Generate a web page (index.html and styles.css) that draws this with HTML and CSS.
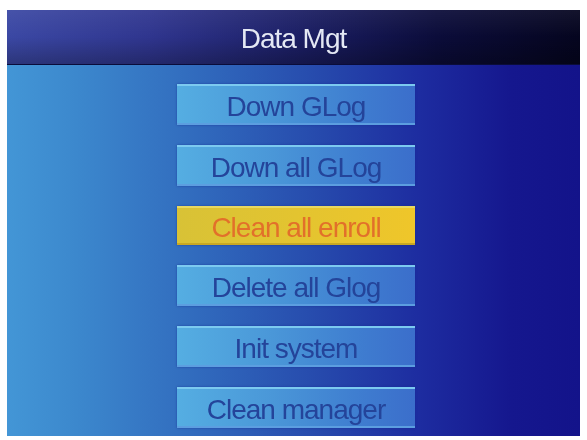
FILE: index.html
```html
<!DOCTYPE html>
<html lang="en">
<head>
<meta charset="utf-8">
<title>Data Mgt</title>
<link rel="stylesheet" href="styles.css">
</head>
<body>
<div class="screen">
  <div class="header"><span class="title">Data Mgt</span></div>
  <div class="menu">
    <div class="item">Down GLog</div>
    <div class="item">Down all GLog</div>
    <div class="item selected">Clean all enroll</div>
    <div class="item">Delete all Glog</div>
    <div class="item">Init system</div>
    <div class="item">Clean manager</div>
  </div>
</div>
</body>
</html>
```
FILE: styles.css
```css
html, body {
  margin: 0;
  padding: 0;
  background: #ffffff;
}
body {
  width: 587px;
  height: 440px;
  overflow: hidden;
  font-family: "Liberation Sans", Arial, sans-serif;
}
.screen {
  margin: 10px 7px 0 7px;
  width: 573px;
  height: 426px;
  display: flex;
  flex-direction: column;
  background: linear-gradient(90deg, #4396d6 0%, #3c88cd 12%, #3068bc 35%, #2649ac 55%, #1d2ca0 72%, #15178e 88%, #13138a 100%);
  filter: blur(0.6px);
}
.header {
  height: 54px;
  display: flex;
  align-items: center;
  justify-content: center;
  background:
    linear-gradient(180deg, rgba(255,255,255,0.06) 0%, rgba(0,0,0,0) 50%, rgba(0,0,0,0.25) 100%),
    linear-gradient(90deg, #3b48a4 0%, #2f358e 25%, #1c1f66 50%, #0b0c3a 75%, #05051f 100%);
  border-bottom: 1px solid #0a0c3a;
}
.title {
  color: #e4e8f4;
  font-size: 28px;
  letter-spacing: -1px;
  padding-top: 4px;
}
.menu {
  display: flex;
  flex-direction: column;
  align-items: center;
  gap: 20px;
  padding: 19px 0 0 5px;
}
.item {
  box-sizing: border-box;
  width: 238px;
  height: 41px;
  display: flex;
  align-items: center;
  justify-content: center;
  padding-top: 4px;
  font-size: 28px;
  letter-spacing: -1px;
  color: #24449a;
  background: linear-gradient(90deg, #55aee2 0%, #4a97d8 40%, #3f7ed0 75%, #3b6ecb 100%);
  border-top: 2px solid #7ccaf0;
  border-bottom: 2px solid #5c9ee0;
  box-shadow: 0 0 2px rgba(20, 40, 140, 0.6);
}
.item.selected {
  height: 39px;
  color: #e2702a;
  background: linear-gradient(90deg, #d8c236 0%, #e3c430 50%, #efc62a 100%);
  border-top: 2px solid #e8d860;
  border-bottom: 2px solid #c8a824;
}
```
